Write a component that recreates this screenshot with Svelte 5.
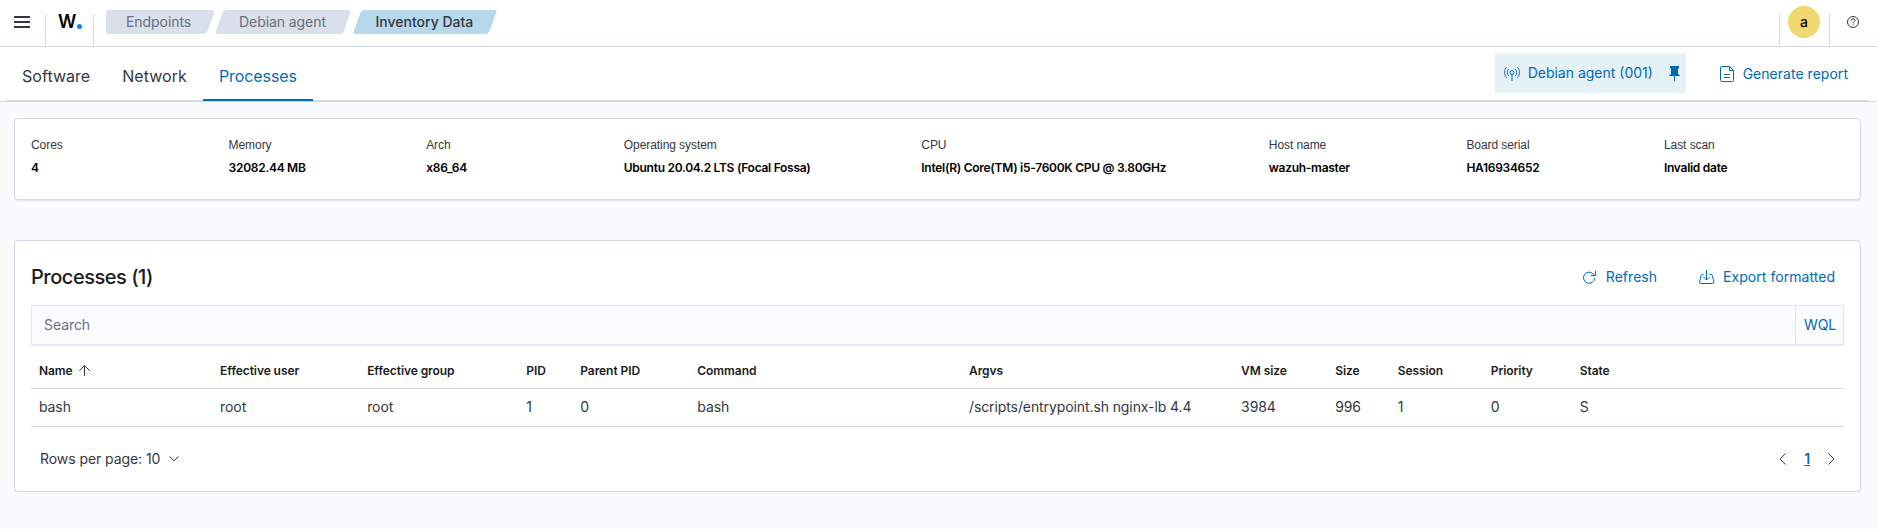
<script>
  const crumbs = ['Endpoints', 'Debian agent', 'Inventory Data'];
  const tabs = ['Software', 'Network', 'Processes'];
  const info = [
    ['Cores', '4'],
    ['Memory', '32082.44 MB'],
    ['Arch', 'x86_64'],
    ['Operating system', 'Ubuntu 20.04.2 LTS (Focal Fossa)'],
    ['CPU', 'Intel(R) Core(TM) i5-7600K CPU @ 3.80GHz'],
    ['Host name', 'wazuh-master'],
    ['Board serial', 'HA16934652'],
    ['Last scan', 'Invalid date']
  ];
  const columns = [
    ['Name', 181, 'bash'],
    ['Effective user', 147, 'root'],
    ['Effective group', 159, 'root'],
    ['PID', 54, '1'],
    ['Parent PID', 117, '0'],
    ['Command', 271.5, 'bash'],
    ['Argvs', 272, '/scripts/entrypoint.sh nginx-lb 4.4'],
    ['VM size', 94, '3984'],
    ['Size', 62.5, '996'],
    ['Session', 93, '1'],
    ['Priority', 89, '0'],
    ['State', 272, 'S']
  ];
</script>

<header class="top">
  <button class="burger" aria-label="Menu">
    <svg width="16" height="12" viewBox="0 0 16 12"><path d="M0 0h16v2H0zM0 5h16v2H0zM0 10h16v2H0z" fill="#343741" /></svg>
  </button>
  <div class="brand">
    <span>W</span><i></i>
  </div>
  <nav class="crumbs">
    {#each crumbs as crumb, i}
      <span class="crumb" class:first={i === 0} class:last={i === 2}>
        <svg class="shape" viewBox={`0 0 ${[109, 136, 144][i]} 24`} width={[109, 136, 144][i]} height="24">
          {#if i === 0}
            <path d="M3 0H106.500Q109 0 108.300 2.300L101.800 20.600Q100.500 24 97 24H3Q0 24 0 21V3Q0 0 3 0Z" />
          {:else if i === 1}
            <path d="M12 0H133.500Q136 0 135.300 2.300L128.800 21.600Q128 24 125.500 24H2.500Q0 24 .7 21.700L7.200 3.400Q8.500 0 12 0Z" />
          {:else}
            <path d="M12 0H141.500Q144 0 143.300 2.300L136.800 20.600Q135.500 24 132 24H2.500Q0 24 .7 21.700L7.200 3.400Q8.500 0 12 0Z" />
          {/if}
        </svg>
        <b>{crumb}</b>
      </span>
    {/each}
  </nav>
  <div class="user"><span>a</span></div>
  <button class="help" aria-label="Help">
    <svg width="12" height="12" viewBox="0 0 12 12" fill="none" stroke="#343741"><circle cx="6" cy="6" r="5.500" /><path d="M4 4.800Q4 2.800 6 2.800T8 4.500Q8 5.300 6.900 5.900Q6 6.400 6 7.300M6 8.300V9.400" /></svg>
  </button>
</header>

<div class="menu">
  <div class="tabs">
    {#each tabs as tab, i}
      <button class="tab" class:active={i === 2}>{tab}</button>
    {/each}
    <div class="agent">
      <svg width="16" height="15" viewBox="0 0 16 15" fill="none" stroke="#006bb4">
        <circle cx="8" cy="6.500" r="2" /><path d="M8 8.500V15" /><path stroke-width="0.900" d="M4.800 2.900Q3.300 4.500 3.300 6.500T4.800 10.100M11.200 2.900Q12.700 4.500 12.700 6.500T11.200 10.100M2.500 1Q.5 3.200 .5 6.300T2.500 11.600M13.500 1Q15.500 3.200 15.500 6.300T13.500 11.600" />
      </svg>
      <span>Debian agent (001)</span>
      <svg class="pin" width="11" height="15" viewBox="0 0 11 15" fill="#006bb4"><path d="M1 0H10V2.500H9V8Q10.500 8.500 11 10H6V15H5V10H0Q.5 8.500 2 8V2.500H1Z" /></svg>
    </div>
    <button class="report">
      <svg width="14" height="16" viewBox="0 0 14 16" fill="none" stroke="#006bb4"><path d="M9.500.5H1.500Q.5.500.5 1.500V14.500Q.5 15.500 1.500 15.500H12.500Q13.500 15.500 13.500 14.500V4.500L9.500.5ZM9.500.5V4.500H13.500M4 8.500H10M4 11.500H10" /></svg>
      <span>Generate report</span>
    </button>
  </div>
</div>

<main>
  <section class="panel info">
    {#each info as [label, value]}
      <div><span class="label">{label}</span><strong>{value}</strong></div>
    {/each}
  </section>

  <section class="panel list">
    <div class="head">
      <h1>Processes (1)</h1>
      <button class="link">
        <svg width="13" height="13" viewBox="0 0 13 13" fill="none" stroke="#006bb4"><path d="M11.700 7A5.600 5.600 0 1 1 10.300 3L12 4.500M12.500 0V4.500H8" /></svg>
        <span>Refresh</span>
      </button>
      <button class="link export">
        <svg width="16" height="14" viewBox="0 0 16 14" fill="none" stroke="#006bb4"><path d="M4.500 4.500H3.300Q2.400 4.500 2.200 5.400L.6 11.800Q.3 13.500 2 13.500H13.500Q15.200 13.500 14.900 11.800L13.300 5.400Q13.100 4.500 12.200 4.500H10.500M7.500 0V10M4.300 6.800L7.500 10L10.700 6.800" /></svg>
        <span>Export formatted</span>
      </button>
    </div>
    <div class="search"><span>Search</span><button>WQL</button></div>
    <table>
      <colgroup>{#each columns as col}<col style:width={`${col[1]}px`} />{/each}</colgroup>
      <thead>
        <tr>
          {#each columns as col, i}
            <th>{col[0]}{#if i === 0}<svg width="11" height="11" viewBox="0 0 11 11" fill="none" stroke="#343741"><path d="M5.500 11V1M.3 5.700L5.500 .6L10.700 5.700" /></svg>{/if}</th>
          {/each}
        </tr>
      </thead>
      <tbody><tr>{#each columns as col}<td>{col[2]}</td>{/each}</tr></tbody>
    </table>
    <footer>
      <span>Rows per page: 10</span>
      <svg class="down" width="10" height="6" viewBox="0 0 10 6" fill="none" stroke="#343741"><path d="M.5.500L5 4.800L9.500.5" /></svg>
      <svg class="prev" width="7" height="12" viewBox="0 0 7 12" fill="none" stroke="#343741"><path d="M6.500.5L1 6L6.500 11.500" /></svg>
      <u>1</u>
      <svg class="next" width="7" height="12" viewBox="0 0 7 12" fill="none" stroke="#343741"><path d="M.5.500L6 6L.5 11.500" /></svg>
    </footer>
  </section>
</main>

<style>
  :global(body) {
    background: #fafbfd;
    font-family: Inter, sans-serif;
    font-size: 14px;
    color: #343741;
    letter-spacing: -0.005em;
  }
  button {
    border: 0;
    padding: 0;
    background: none;
    font: inherit;
    color: inherit;
    letter-spacing: inherit;
    display: flex;
    align-items: center;
  }
  svg { display: block; flex: none; }
  .top {
    height: 46px;
    background: #fff;
    border-bottom: 1px solid #d3dae6;
    display: flex;
    align-items: flex-start;
  }
  .burger { width: 45px; height: 44px; padding-left: 14px; box-sizing: border-box; }
  .brand {
    width: 47px;
    height: 32px;
    margin-top: 14px;
    border: solid #d3dae6;
    border-width: 0 1px;
    display: flex;
    color: #000;
    font: 600 18px/16px Inter, sans-serif;
  }
  .brand span { margin-left: 12px; width: 18px; }
  .brand i { width: 5px; height: 5px; border-radius: 50%; background: #0d80ff; margin: 10px 0 0 1px; }
  .crumbs { display: flex; padding: 10px 0 0 12px; }
  .crumb { width: 109px; height: 24px; display: grid; color: #69707d; }
  .crumb + .crumb { width: 138px; }
  .crumb.last { width: 144px; color: #343741; }
  .crumb > * { grid-area: 1 / 1; }
  .crumb b { font-weight: 400; line-height: 24px; padding-left: 24px; z-index: 1; }
  .crumb.first b { padding-left: 20px; }
  .crumb.last b { font-weight: 500; padding-left: 22.5px; letter-spacing: 0; }
  .shape { fill: #d9dfeb; }
  .last .shape { fill: #b8d7ea; }
  .user {
    box-sizing: border-box;
    margin: 14px 0 0 auto;
    width: 51px;
    height: 32px;
    border: solid #d3dae6;
    border-width: 0 1px;
  }
  .user span {
    display: block;
    width: 32px;
    height: 32px;
    margin: -8px 0 0 8px;
    border-radius: 50%;
    background: #f1d86f;
    color: #000;
    font-weight: 500;
    line-height: 32px;
    text-align: center;
  }
  .help { margin: 16px 18px 0 17px; }
  .menu { height: 54px; background: #fff; border-bottom: 1px solid #d3dae6; padding: 0 8px 0 6px; }
  .tabs { height: 54px; display: flex; box-shadow: inset 0 -1px #d3dae6; }
  .tab { height: 54px; font-size: 16px; padding: 4px 16px 0; box-sizing: border-box; letter-spacing: 0.003em; }
  .tab.active { color: #006bb4; border-bottom: 2px solid #006bb4; padding-top: 6px; letter-spacing: -0.005em; }
  .agent, .report, .link { color: #006bb4; }
  .agent {
    margin: 6px 0 0 auto;
    width: 191px;
    height: 40px;
    background: #e6f0f7;
    display: flex;
    align-items: center;
    box-sizing: border-box;
    padding: 0 6px 0 9px;
  }
  .agent span { margin: -2px 0 0 8px; letter-spacing: 0; }
  .pin { margin-left: auto; }
  .report { height: 40px; margin: 7px 21px 0 34px; }
  .report span { margin: -2px 0 0 9px; letter-spacing: 0.002em; }
  main { padding: 16px 16px 0 14px; }
  .panel {
    box-sizing: border-box;
    background: #fff;
    border: 1px solid #d3dae6;
    border-radius: 4px;
    box-shadow: 0 2px 2px -1px rgba(152, 162, 179, 0.3);
  }
  .info {
    height: 82px;
    display: grid;
    grid-template-columns: 197.600px 197.600px 197.600px 297.500px 347.500px 197.600px 197.600px 1fr;
    padding: 18px 16px 0;
  }
  .info .label { display: block; font: 12px/16px "Liberation Sans", sans-serif; }
  .info strong { display: block; font-size: 12px; font-weight: 600; line-height: 18px; margin-top: 6px; color: #000; letter-spacing: -0.28px; }
  .list { height: 252px; margin-top: 40px; padding: 0 16px; }
  .head { height: 64px; display: flex; align-items: center; padding: 7px 9px 0 0; box-sizing: border-box; }
  h1 { margin: 0 auto 0 0; font-size: 20px; font-weight: 500; color: #1a1c21; letter-spacing: -0.48px; }
  .link { letter-spacing: 0.003em; }
  .link svg { margin-top: 1px; }
  .link span { margin-left: 10px; }
  .link.export { margin-left: 42px; }
  .link.export span { margin-left: 8px; }
  .search {
    height: 40px;
    box-sizing: border-box;
    border: 1px solid #e0e4ee;
    box-shadow: 0 2px 2px -1px rgba(152, 162, 179, 0.2);
    background: #fbfcfd;
    display: flex;
    justify-content: space-between;
    align-items: center;
    padding-left: 12px;
    color: #69707d;
  }
  .search > span { padding-bottom: 2px; }
  .search button { box-sizing: border-box; width: 48px; height: 38px; border-left: 1px solid #e0e4ee; color: #006bb4; padding: 0 0 2px 8px; }
  table { table-layout: fixed; width: 1813px; border-collapse: separate; border-spacing: 0; }
  th, td { text-align: left; padding: 0 8px; box-sizing: border-box; border-bottom: 1px solid #d3dae6; white-space: nowrap; }
  th { height: 44px; padding-top: 8px; font-size: 12px; font-weight: 600; color: #1a1c21; }
  th svg { display: inline-block; margin-left: 6px; vertical-align: -1px; }
  td { height: 38px; padding-bottom: 3px; letter-spacing: -0.007em; }
  footer { display: flex; align-items: center; height: 64px; padding: 0 9px; }
  footer > span, u { padding-bottom: 1px; }
  .down { margin-left: 9px; }
  .prev { margin-left: auto; }
  u { color: #006bb4; font-weight: 600; margin: 0 18px; }
</style>
